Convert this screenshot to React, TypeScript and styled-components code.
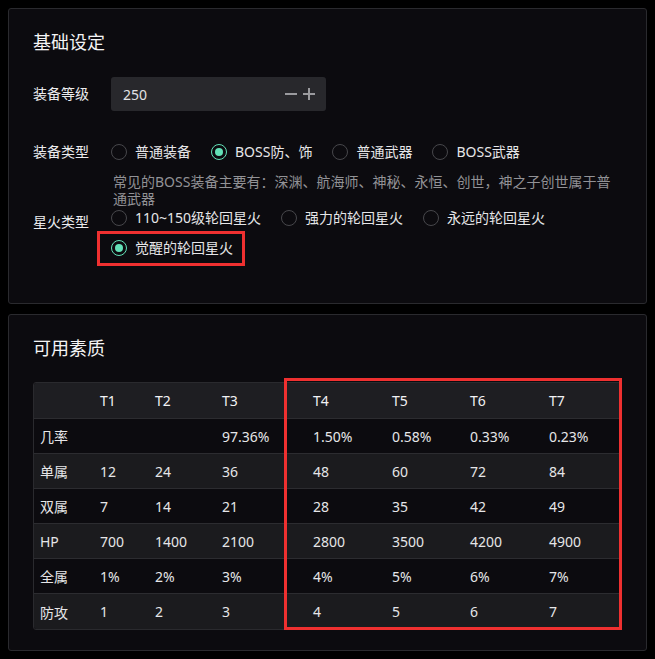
import React from "react";
import styled, { createGlobalStyle } from "styled-components";

const GlobalStyle = createGlobalStyle`
  html, body { background: #000; }
  body {
    margin: 8px;
    font-family: "Noto Sans", "Noto Sans CJK SC", sans-serif;
    font-size: 14px;
    color: #e8e8ea;
  }
  * { box-sizing: border-box; }
`;

const Page = styled.div`
  display: flex;
  flex-direction: column;
  gap: 10px;
`;

const Card = styled.section<{ $pb: number }>`
  background: #0c0b0f;
  border: 1px solid #2a2a2e;
  border-radius: 3px;
  padding: 19px 24px ${(p) => p.$pb}px;
`;

const CardTitle = styled.h2<{ $mb: number }>`
  margin: 0 0 ${(p) => p.$mb}px;
  font-size: 18px;
  line-height: 28px;
  font-weight: 400;
  color: #f4f4f5;
`;

const FormItem = styled.div<{ $mb?: number }>`
  display: grid;
  grid-template-columns: 78px 1fr;
  margin-bottom: ${(p) => p.$mb ?? 0}px;
`;

const Label = styled.div<{ $h: number; $pt?: number }>`
  line-height: ${(p) => p.$h}px;
  padding-top: ${(p) => p.$pt ?? 0}px;
  color: #ececee;
  white-space: nowrap;
`;

const InputNumber = styled.div`
  width: 215px;
  height: 34px;
  background: #28282c;
  border-radius: 3px;
  display: flex;
  align-items: center;
  padding: 0 11px 0 12px;
  color: #e2e2e4;
`;

const InputValue = styled.span`
  flex: 1;
`;

const StepButtons = styled.div`
  display: flex;
  align-items: center;
  gap: 6px;
  color: #9a9a9e;
`;

const RadioGroup = styled.div<{ $h: number; $rowGap: number }>`
  display: flex;
  flex-wrap: wrap;
  row-gap: ${(p) => p.$rowGap}px;
  line-height: ${(p) => p.$h}px;
`;

const RadioItem = styled.label`
  position: relative;
  display: inline-flex;
  align-items: center;
  gap: 8px;
  margin-right: 20px;
  color: #e6e6e8;
  white-space: nowrap;
`;

const Circle = styled.span<{ $on: boolean }>`
  width: 16px;
  height: 16px;
  border-radius: 50%;
  border: 1px solid ${(p) => (p.$on ? "#63e2b7" : "#47474b")};
  display: inline-flex;
  align-items: center;
  justify-content: center;
  flex: none;
  &::after {
    content: "";
    width: 8px;
    height: 8px;
    border-radius: 50%;
    background: #63e2b7;
    display: ${(p) => (p.$on ? "block" : "none")};
  }
`;

const Highlight = styled.span`
  position: relative;
  display: inline-flex;
  &::after {
    content: "";
    position: absolute;
    left: -14px;
    right: 8px;
    top: -6px;
    bottom: -7px;
    border: 3px solid #ef3030;
    pointer-events: none;
  }
`;

const Help = styled.div`
  grid-column: 2;
  padding: 4px 0 0 2px;
  line-height: 17px;
  color: #929296;
`;

const TableWrap = styled.div`
  position: relative;
`;

const Table = styled.table`
  width: 100%;
  border-collapse: separate;
  border-spacing: 0;
  table-layout: fixed;
  border: 1px solid #2a2a2e;
  border-radius: 3px;
  overflow: hidden;
`;

const Th = styled.th`
  height: 36px;
  padding: 0 0 0 6px;
  text-align: left;
  font-weight: 400;
  color: #f2f2f4;
  background: #1e1e22;
  border-bottom: 1px solid #2c2c30;
`;

const Tr = styled.tr<{ $alt: boolean }>`
  background: ${(p) => (p.$alt ? "#1b1b1e" : "#0c0b0f")};
`;

const Td = styled.td<{ $last: boolean }>`
  height: 35px;
  padding: 0 0 0 6px;
  color: #e6e6e8;
  border-bottom: ${(p) => (p.$last ? "none" : "1px solid #2c2c30")};
`;

const TableMark = styled.div`
  position: absolute;
  left: 251px;
  top: -4px;
  width: 338px;
  height: 252px;
  border: 3px solid #ef3030;
  pointer-events: none;
`;

const Radio = ({ label, on }: { label: string; on?: boolean }) => (
  <RadioItem>
    <Circle $on={!!on} />
    {label}
  </RadioItem>
);

const colWidths = [60, 55, 67, 91, 79, 78, 79, 78];
const headers = ["", "T1", "T2", "T3", "T4", "T5", "T6", "T7"];
const rows = [
  ["几率", "", "", "97.36%", "1.50%", "0.58%", "0.33%", "0.23%"],
  ["单属", "12", "24", "36", "48", "60", "72", "84"],
  ["双属", "7", "14", "21", "28", "35", "42", "49"],
  ["HP", "700", "1400", "2100", "2800", "3500", "4200", "4900"],
  ["全属", "1%", "2%", "3%", "4%", "5%", "6%", "7%"],
  ["防攻", "1", "2", "3", "4", "5", "6", "7"],
];

export default function App() {
  return (
    <>
      <GlobalStyle />
      <Page>
        <Card $pb={44}>
          <CardTitle $mb={21}>基础设定</CardTitle>
          <FormItem $mb={24}>
            <Label $h={34}>装备等级</Label>
            <InputNumber>
              <InputValue>250</InputValue>
              <StepButtons>
                <svg width="12" height="12" viewBox="0 0 12 12">
                  <rect x="0" y="5" width="12" height="2" fill="currentColor" />
                </svg>
                <svg width="12" height="12" viewBox="0 0 12 12">
                  <rect x="0" y="5" width="12" height="2" fill="currentColor" />
                  <rect x="5" y="0" width="2" height="12" fill="currentColor" />
                </svg>
              </StepButtons>
            </InputNumber>
          </FormItem>
          <FormItem>
            <Label $h={34}>装备类型</Label>
            <RadioGroup $h={34} $rowGap={0}>
              <Radio label="普通装备" />
              <Radio label="BOSS防、饰" on />
              <Radio label="普通武器" />
              <Radio label="BOSS武器" />
            </RadioGroup>
            <Help>常见的BOSS装备主要有：深渊、航海师、神秘、永恒、创世，神之子创世属于普通武器</Help>
          </FormItem>
          <FormItem>
            <Label $h={22} $pt={4}>星火类型</Label>
            <RadioGroup $h={22} $rowGap={8}>
              <Radio label="110~150级轮回星火" />
              <Radio label="强力的轮回星火" />
              <Radio label="永远的轮回星火" />
              <Highlight>
                <Radio label="觉醒的轮回星火" on />
              </Highlight>
            </RadioGroup>
          </FormItem>
        </Card>
        <Card $pb={20}>
          <CardTitle $mb={20}>可用素质</CardTitle>
          <TableWrap>
            <Table>
              <colgroup>
                {colWidths.map((w, i) => (
                  <col key={i} style={{ width: w }} />
                ))}
              </colgroup>
              <thead>
                <tr>
                  {headers.map((h, i) => (
                    <Th key={i}>{h}</Th>
                  ))}
                </tr>
              </thead>
              <tbody>
                {rows.map((r, ri) => (
                  <Tr key={ri} $alt={ri % 2 === 1}>
                    {r.map((c, ci) => (
                      <Td key={ci} $last={ri === rows.length - 1}>
                        {c}
                      </Td>
                    ))}
                  </Tr>
                ))}
              </tbody>
            </Table>
            <TableMark />
          </TableWrap>
        </Card>
      </Page>
    </>
  );
}
